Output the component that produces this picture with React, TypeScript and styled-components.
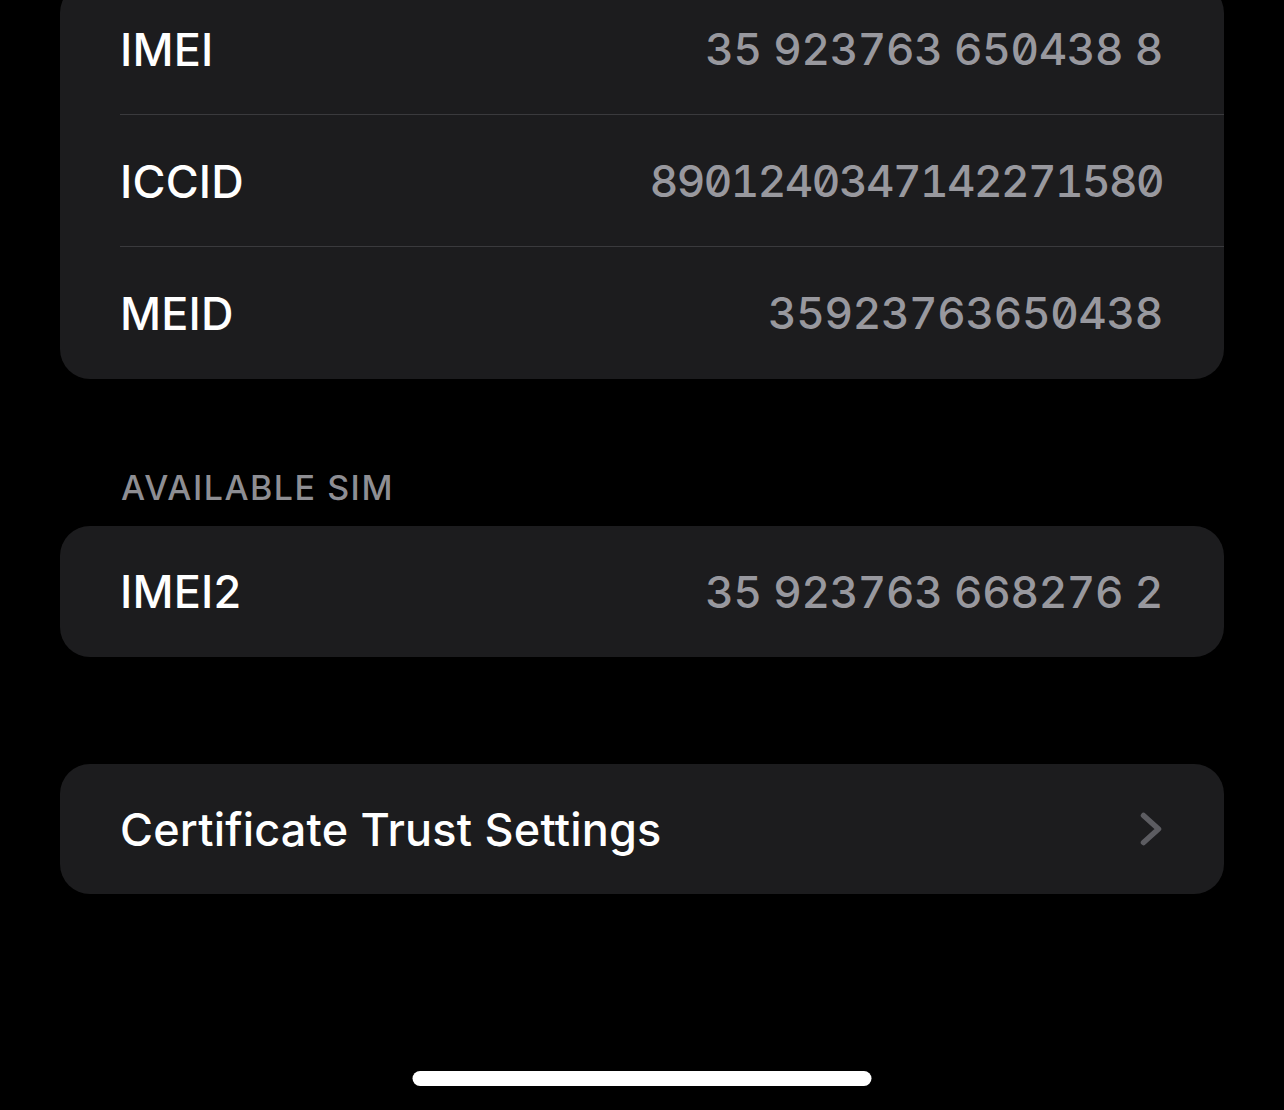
import React from "react";
import styled, { createGlobalStyle } from "styled-components";

const GlobalStyle = createGlobalStyle`
  html, body {
    margin: 0;
    padding: 0;
    background: #000000;
  }
  body {
    font-family: Inter, "Noto Sans", "Liberation Sans", sans-serif;
    -webkit-font-smoothing: antialiased;
  }
`;

const Screen = styled.div`
  position: relative;
  width: 1284px;
  height: 1110px;
  overflow: hidden;
  background: #000000;
  display: flex;
  flex-direction: column;
  padding: 0 60px;
  box-sizing: border-box;
`;

const Group = styled.div<{ $offset?: number }>`
  background: #1c1c1e;
  border-radius: 30px;
  margin-top: ${(p) => p.$offset ?? 0}px;
  display: flex;
  flex-direction: column;
  overflow: hidden;
`;

const Row = styled.div<{ $height: number; $divider?: boolean }>`
  position: relative;
  height: ${(p) => p.$height}px;
  display: flex;
  align-items: center;
  justify-content: space-between;
  padding: 0 61px 0 60px;
  flex-shrink: 0;
  box-sizing: border-box;

  &::after {
    content: "";
    display: ${(p) => (p.$divider ? "block" : "none")};
    position: absolute;
    left: 60px;
    right: 0;
    bottom: 0;
    height: 1px;
    background: #3a3a3d;
  }
`;

const Label = styled.span`
  color: #ffffff;
  font-size: 45px;
  font-weight: 500;
  letter-spacing: 0.2px;
  white-space: nowrap;
`;

const Value = styled.span<{ $tracking?: number }>`
  color: #98989e;
  font-family: Inter, "DejaVu Sans Mono", monospace;
  font-size: 44px;
  font-weight: 500;
  font-feature-settings: "tnum" 1, "zero" 1;
  font-variant-numeric: tabular-nums slashed-zero;
  letter-spacing: ${(p) => p.$tracking ?? -0.3}px;
  white-space: nowrap;
`;

const SectionHeader = styled.div`
  margin-top: 88px;
  height: 40px;
  margin-bottom: 19px;
  padding-left: 61px;
  display: flex;
  align-items: center;
  color: #8e8e93;
  font-size: 34px;
  font-weight: 500;
  letter-spacing: 1.5px;
  text-transform: uppercase;
`;

const Spacer = styled.div<{ $size: number }>`
  height: ${(p) => p.$size}px;
  flex-shrink: 0;
`;

const Chevron = styled.svg`
  width: 22px;
  height: 34px;
  display: block;
  margin-right: 1px;
`;

const HomeIndicator = styled.div`
  position: absolute;
  left: 50%;
  bottom: 24px;
  transform: translateX(-50%);
  width: 459px;
  height: 15px;
  border-radius: 8px;
  background: #ffffff;
`;

const infoRows = [
  { label: "IMEI", value: "35 923763 650438 8" },
  { label: "ICCID", value: "8901240347142271580", tracking: -1.5 },
  { label: "MEID", value: "35923763650438" },
];

export default function App() {
  return (
    <>
      <GlobalStyle />
      <Screen>
        <Group $offset={-17}>
          {infoRows.map((r, i) => (
            <Row key={r.label} $height={132} $divider={i < infoRows.length - 1}>
              <Label>{r.label}</Label>
              <Value $tracking={r.tracking}>{r.value}</Value>
            </Row>
          ))}
        </Group>

        <SectionHeader>Available SIM</SectionHeader>

        <Group>
          <Row $height={131}>
            <Label>IMEI2</Label>
            <Value>35 923763 668276 2</Value>
          </Row>
        </Group>

        <Spacer $size={107} />

        <Group>
          <Row $height={130}>
            <Label>Certificate Trust Settings</Label>
            <Chevron viewBox="0 0 22 34" fill="none">
              <path
                d="M3.5 3.5 L18.5 17 L3.5 30.5"
                stroke="#5c5c61"
                strokeWidth="5.5"
                strokeLinecap="round"
                strokeLinejoin="round"
              />
            </Chevron>
          </Row>
        </Group>

        <HomeIndicator />
      </Screen>
    </>
  );
}
